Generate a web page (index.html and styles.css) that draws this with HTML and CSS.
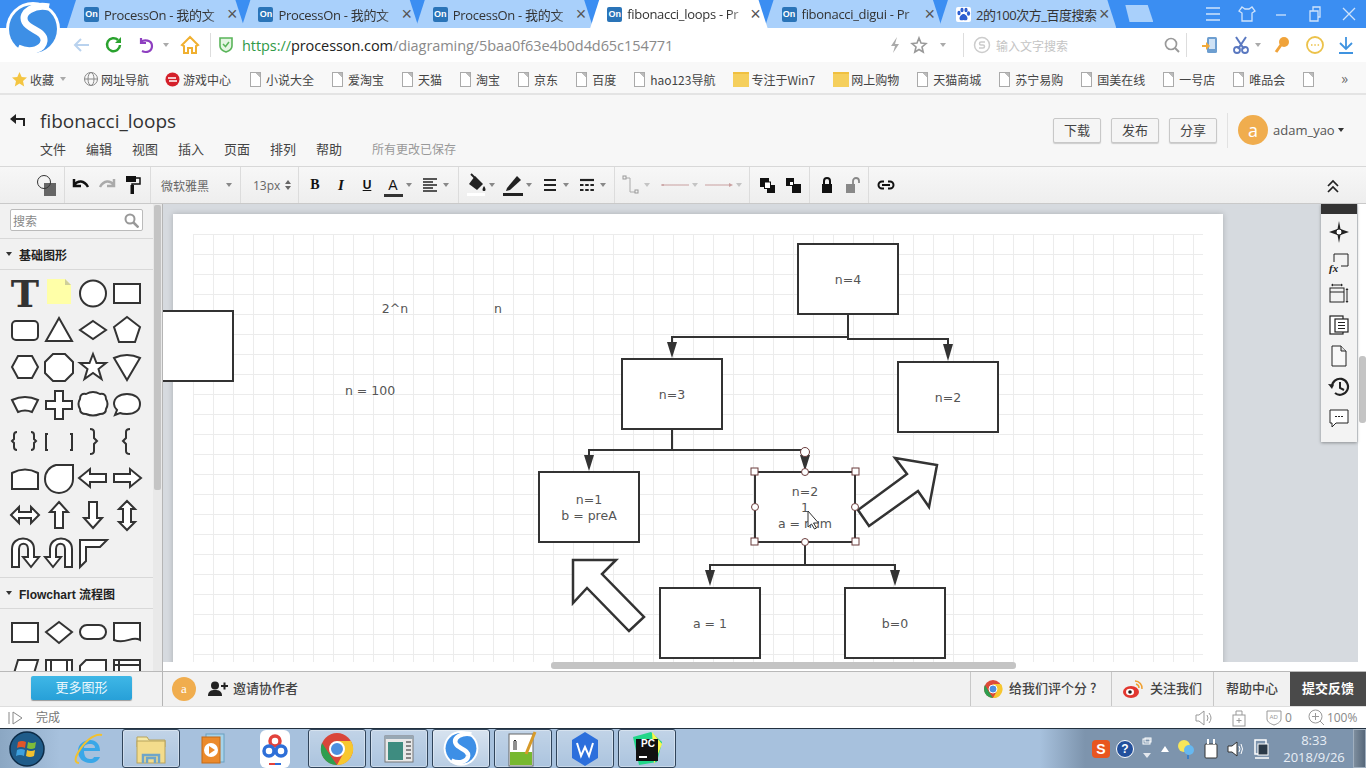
FILE: index.html
```html
<!DOCTYPE html>
<html lang="zh-CN">
<head>
<meta charset="utf-8">
<title>fibonacci_loops</title>
<link rel="stylesheet" href="styles.css">
</head>
<body>
<svg class="logo" width="56" height="56" viewBox="0 0 56 56"><circle cx="28" cy="27" r="27" fill="#fff"/><circle cx="28" cy="27" r="24" fill="#3d8fe6"/><path d="M44 5C30 2 15 10 20 20c4 8 20 9 19 19-1 8-13 13-26 7" fill="none" stroke="#fff" stroke-width="7"/></svg>

<header class="tabbar">
  <div class="tab"><i class="fav">On</i><span class="tab-title">ProcessOn - 我的文</span><b class="x">×</b></div>
  <div class="tab"><i class="fav">On</i><span class="tab-title">ProcessOn - 我的文</span><b class="x">×</b></div>
  <div class="tab"><i class="fav">On</i><span class="tab-title">ProcessOn - 我的文</span><b class="x">×</b></div>
  <div class="tab active"><i class="fav">On</i><span class="tab-title">fibonacci_loops - Pr</span><b class="x">×</b></div>
  <div class="tab"><i class="fav">On</i><span class="tab-title">fibonacci_digui - Pr</span><b class="x">×</b></div>
  <div class="tab"><i class="fav paw"><svg width="15" height="15" viewBox="0 0 15 15"><rect width="15" height="15" rx="2" fill="#fff"/><g fill="#2f5fd0"><ellipse cx="3" cy="6" rx="1.6" ry="2.2"/><ellipse cx="6" cy="3" rx="1.6" ry="2.2"/><ellipse cx="10" cy="3" rx="1.6" ry="2.2"/><ellipse cx="12.5" cy="6.5" rx="1.6" ry="2.2"/><path d="M7.5 7c-2 0-4 2.500-4 4.500 0 2 2 2 4 1.500 2 .5 4 .5 4-1.500S9.500 7 7.500 7z"/></g></svg></i><span class="tab-title wide">2的100次方_百度搜索</span><b class="x xw">×</b></div>
  <div class="newtab"></div>
  <div class="winctl">
    <svg width="34" height="20" viewBox="0 0 34 20"><path d="M10 4h14M10 10h14M10 16h14" class="wc"/></svg>
    <svg width="34" height="20" viewBox="0 0 34 20"><path d="M12 3l3 2h4l3-2 3 4-3 2v8H12V9L9 7z" class="wc"/></svg>
    <svg width="34" height="20" viewBox="0 0 34 20"><path d="M12 11h10" class="wc"/></svg>
    <svg width="34" height="20" viewBox="0 0 34 20"><path d="M12 7h8v10h-8zM15 7V3h7v10h-2" class="wc"/></svg>
    <svg width="34" height="20" viewBox="0 0 34 20"><path d="M11 4l12 12M23 4L11 16" class="wc"/></svg>
  </div>
</header>

<nav class="addr">
  <svg class="ab a1" width="20" height="20" viewBox="0 0 20 20"><path d="M17 10H3M9 4l-6 6 6 6" fill="none" stroke="#b9d2ee" stroke-width="2"/></svg>
  <svg class="ab" width="20" height="20" viewBox="0 0 20 20"><path d="M16 10a6.500 6.500 0 1 1-2-5" fill="none" stroke="#2aa22e" stroke-width="2.500"/><path d="M17 2v6h-6z" fill="#2aa22e"/></svg>
  <svg class="ab" width="20" height="20" viewBox="0 0 20 20"><path d="M5 3v5h5M5 7c3-3 11-2 11 4s-6 7-10 5" fill="none" stroke="#8e3fc0" stroke-width="2.200"/></svg>
  <i class="caret c-undo"></i>
  <svg class="ab home" width="20" height="20" viewBox="0 0 20 20"><path d="M10 2L2 10l2 1v7h4v-5h4v5h4v-7l2-1z" fill="none" stroke="#f0b030" stroke-width="2"/></svg>
  <i class="vsep"></i>
  <svg class="ab shield" width="16" height="18" viewBox="0 0 16 18"><path d="M2 2h12v8c0 3-3 5-6 6-3-1-6-3-6-6z" fill="#e5f5e3" stroke="#5ab55a" stroke-width="1.600"/><path d="M5 8l2.500 2.500L11 6" fill="none" stroke="#5ab55a" stroke-width="1.500"/></svg>
  <span class="url"><span class="g">https://</span><span class="d">processon.com</span>/diagraming/5baa0f63e4b0d4d65c154771</span>
  <div class="addr-r">
    <svg class="ar" width="20" height="20" viewBox="0 0 20 20"><path d="M12 2L6 11h4l-2 7 6-9h-4z" fill="#aaa"/></svg>
    <svg class="ar star" width="20" height="20" viewBox="0 0 20 20"><path d="M10 3l2 5 5 .5-4 3.500 1.200 5L10 14.500 5.800 17 7 12 3 8.500 8 8z" fill="none" stroke="#999" stroke-width="1.600"/></svg>
    <i class="caret c-star"></i>
    <i class="vsep s2"></i>
    <svg class="ar sg" width="18" height="18" viewBox="0 0 18 18"><circle cx="9" cy="9" r="7.500" fill="none" stroke="#ccc" stroke-width="1.500"/><path d="M12 6H8a1.500 1.500 0 0 0 0 3h2a1.500 1.500 0 0 1 0 3H6" fill="none" stroke="#ccc" stroke-width="1.500"/></svg>
    <span class="ph">输入文字搜索</span>
    <svg class="ar mg" width="18" height="18" viewBox="0 0 18 18"><circle cx="8" cy="8" r="5.500" fill="none" stroke="#999" stroke-width="1.700"/><path d="M12 12l4 4" stroke="#999" stroke-width="2"/></svg>
    <i class="vsep s3"></i>
    <svg class="ar ph-i" width="20" height="20" viewBox="0 0 20 20"><rect x="7" y="2" width="10" height="16" rx="1.500" fill="#6d9ed0"/><rect x="9" y="4" width="6" height="10" fill="#cfe2f5"/><path d="M2 10h4V7l4 4-4 4v-3H2z" fill="#f3ab3a"/></svg>
    <svg class="ar sc" width="20" height="20" viewBox="0 0 20 20"><path d="M5 2l8 12M15 2L7 14" stroke="#5a78c0" stroke-width="2"/><circle cx="6" cy="15" r="3" fill="none" stroke="#5a78c0" stroke-width="1.800"/><circle cx="14" cy="15" r="3" fill="none" stroke="#5a78c0" stroke-width="1.800"/></svg>
    <i class="caret c-sc"></i>
    <svg class="ar ky" width="20" height="20" viewBox="0 0 20 20"><circle cx="12" cy="7" r="5" fill="#f0a33a"/><path d="M9 10l-5 7" stroke="#f0a33a" stroke-width="3"/></svg>
    <svg class="ar dt" width="20" height="20" viewBox="0 0 20 20"><circle cx="10" cy="10" r="8" fill="none" stroke="#ecc24a" stroke-width="1.800"/><path d="M6 10h1.500M9.300 10h1.500M12.600 10h1.500" stroke="#ecc24a" stroke-width="1.500"/></svg>
    <svg class="ar dl" width="20" height="20" viewBox="0 0 20 20"><path d="M10 2v11M4 8l6 6 6-6M3 18h14" fill="none" stroke="#3f93e0" stroke-width="1.800"/></svg>
  </div>
</nav>

<nav class="bookmarks">
  <span class="bm first"><svg width="15" height="15" viewBox="0 0 15 15"><path d="M7.500 0l2.200 5 5.300.5-4 3.500 1.200 5.500-4.700-2.900-4.700 2.900L4 9 0 5.500 5.300 5z" fill="#f4c542"/></svg>收藏<i class="caret c-bm"></i></span>
  <span class="bm site"><svg width="16" height="16" viewBox="0 0 16 16"><g fill="none" stroke="#888"><circle cx="8" cy="8" r="6.500"/><ellipse cx="8" cy="8" rx="3" ry="6.500"/><path d="M1.500 8h13"/></g></svg>网址导航</span>
  <span class="bm game"><svg width="15" height="15" viewBox="0 0 15 15"><circle cx="7.500" cy="7.500" r="7" fill="#d4202a"/><path d="M3 6h8M4 9h8" stroke="#fff" stroke-width="1.500"/></svg>游戏中心</span>
  <span class="bm"><i class="doc"></i>小说大全</span>
  <span class="bm"><i class="doc"></i>爱淘宝</span>
  <span class="bm"><i class="doc"></i>天猫</span>
  <span class="bm"><i class="doc"></i>淘宝</span>
  <span class="bm"><i class="doc"></i>京东</span>
  <span class="bm"><i class="doc"></i>百度</span>
  <span class="bm"><i class="doc"></i>hao123导航</span>
  <span class="bm fd"><i class="folder"></i>专注于Win7</span>
  <span class="bm fd"><i class="folder"></i>网上购物</span>
  <span class="bm"><i class="doc"></i>天猫商城</span>
  <span class="bm"><i class="doc"></i>苏宁易购</span>
  <span class="bm"><i class="doc"></i>国美在线</span>
  <span class="bm"><i class="doc"></i>一号店</span>
  <span class="bm"><i class="doc"></i>唯品会</span>
  <span class="bm"><i class="doc"></i></span>
  <span class="more">»</span>
</nav>

<section class="apphead">
  <svg class="back" width="16" height="14" viewBox="0 0 16 14"><path d="M15 12V5H3" fill="none" stroke="#222" stroke-width="2"/><path d="M7 0v10L1 5z" fill="#222"/></svg>
  <div class="doc-info">
    <div class="doc-title">fibonacci_loops</div>
    <div class="menu"><span>文件</span><span>编辑</span><span>视图</span><span>插入</span><span>页面</span><span>排列</span><span>帮助</span><em>所有更改已保存</em></div>
  </div>
  <div class="head-r">
    <button class="btn">下载</button><button class="btn">发布</button><button class="btn">分享</button>
    <i class="head-sep"></i>
    <span class="avatar">a</span><span class="uname">adam_yao</span><i class="caret c-dark"></i>
  </div>
</section>

<section class="toolbar">
  <div class="tg g1"><span class="tb"><svg width="22" height="24" viewBox="0 0 22 24"><rect x="8" y="10" width="12" height="13" fill="#666"/><circle cx="8" cy="9" r="6.500" fill="none" stroke="#333"/></svg></span></div>
  <div class="tg g2">
    <span class="tb"><svg width="18" height="14" viewBox="0 0 18 14"><path d="M2 1v7h7M2 7c4-5 10-5 14 2" fill="none" stroke="#111" stroke-width="2.500"/></svg></span>
    <span class="tb"><svg width="18" height="14" viewBox="0 0 18 14"><path d="M16 1v7H9M16 7C12 2 6 2 2 9" fill="none" stroke="#aaa" stroke-width="2.500"/></svg></span>
    <span class="tb"><svg width="16" height="20" viewBox="0 0 16 20"><path d="M1 1h10v6H1z" fill="#111"/><path d="M11 3h4v6H7v2" fill="none" stroke="#111" stroke-width="1.500"/><rect x="5.500" y="10" width="3.500" height="9" fill="#111"/></svg></span>
  </div>
  <div class="tg g3"><span class="fontname">微软雅黑</span><i class="caret c-tb c-font"></i></div>
  <div class="tg g4"><span class="fontsize">13px</span><span class="stepper"><i></i><i></i></span></div>
  <div class="tg g5">
    <span class="tb fmt b">B</span><span class="tb fmt i">I</span><span class="tb fmt u">U</span>
    <span class="tbc"><span class="tb fmt a">A</span><i class="caret c-tb"></i></span>
    <span class="tbc"><span class="tb"><svg width="16" height="14" viewBox="0 0 16 14"><path d="M1 1h14M1 4h10M1 7h14M1 10h10M1 13h14" stroke="#222" stroke-width="1.300"/></svg></span><i class="caret c-tb"></i></span>
  </div>
  <div class="tg g6">
    <span class="tbc"><span class="tb"><svg width="22" height="24" viewBox="0 0 22 24"><path d="M10 3l8 8-6 6-8-6z" fill="#222"/><path d="M6 1l5 5" stroke="#222" stroke-width="2"/><path d="M19 13c2 3 2 5 0 5s-2-2 0-5z" fill="#222"/><rect x="2" y="20" width="18" height="3" fill="#fff"/></svg></span><i class="caret c-tb"></i></span>
    <span class="tbc"><span class="tb"><svg width="22" height="24" viewBox="0 0 22 24"><path d="M5 15L15 3l4 4-11 10-4 1z" fill="#222"/><rect x="1" y="20" width="20" height="3" fill="#222"/></svg></span><i class="caret c-tb"></i></span>
    <span class="tbc"><span class="tb"><svg width="16" height="14" viewBox="0 0 16 14"><path d="M2 2h12M2 7h12M2 12h12" stroke="#222" stroke-width="2.200"/></svg></span><i class="caret c-tb"></i></span>
    <span class="tbc"><span class="tb"><svg width="16" height="14" viewBox="0 0 16 14"><path d="M1 2h14" stroke="#222" stroke-width="2.200"/><path d="M1 7h14M1 12h14" stroke="#222" stroke-width="2.200" stroke-dasharray="3.500 1.700"/></svg></span><i class="caret c-tb"></i></span>
  </div>
  <div class="tg g7">
    <span class="tbc"><span class="tb"><svg width="18" height="20" viewBox="0 0 18 20"><path d="M3 3h5v14h7" fill="none" stroke="#aaa"/><rect x="1" y="1" width="3" height="3" fill="#f5f5f5" stroke="#999"/><rect x="13" y="15" width="3" height="3" fill="#f5f5f5" stroke="#999"/></svg></span><i class="caret c-tb c-lt"></i></span>
    <span class="tbl"><svg width="28" height="6" viewBox="0 0 28 6"><path d="M0 3h28" stroke="#c9a0a0"/><circle cx="2" cy="3" r="1" fill="#c9a0a0"/></svg><i class="caret c-tb c-lt"></i></span>
    <span class="tbl"><svg width="28" height="6" viewBox="0 0 28 6"><path d="M0 3h26" stroke="#c9a0a0"/><path d="M28 3l-4-2v4z" fill="#c9a0a0"/></svg><i class="caret c-tb c-lt"></i></span>
  </div>
  <div class="tg g8">
    <span class="tb"><svg width="17" height="17" viewBox="0 0 17 17"><rect x="1" y="1" width="9" height="9" fill="#111"/><rect x="8" y="8" width="8" height="8" fill="#111"/><rect x="5.500" y="5" width="6" height="6.500" fill="#fff" stroke="#111"/></svg></span>
    <span class="tb"><svg width="17" height="17" viewBox="0 0 17 17"><rect x="1" y="1" width="8" height="8" fill="#111"/><rect x="7" y="7" width="9" height="9" fill="#111"/><rect x="5" y="5" width="3" height="3" fill="#fff"/></svg></span>
  </div>
  <div class="tg g9">
    <span class="tb"><svg width="14" height="16" viewBox="0 0 14 16"><rect x="2" y="7" width="10" height="9" fill="#111"/><path d="M4 7V4a3 3 0 0 1 6 0v3" fill="none" stroke="#111" stroke-width="2"/></svg></span>
    <span class="tb"><svg width="16" height="16" viewBox="0 0 16 16"><rect x="1" y="7" width="9" height="9" fill="#888"/><path d="M8 7V4a3 3 0 0 1 6 0v2" fill="none" stroke="#888" stroke-width="1.800"/></svg></span>
  </div>
  <div class="tg g10"><span class="tb"><svg width="18" height="10" viewBox="0 0 18 10"><path d="M7 1.500H5a3.500 3.500 0 0 0 0 7h2M11 1.500h2a3.500 3.500 0 0 1 0 7h-2M5 5h8" fill="none" stroke="#111" stroke-width="2"/></svg></span></div>
  <svg class="collapse" width="12" height="14" viewBox="0 0 12 14"><path d="M1 7l5-5 5 5M1 13l5-5 5 5" fill="none" stroke="#222" stroke-width="1.700"/></svg>
</section>

<main class="main">
  <aside class="side">
    <div class="side-in">
      <div class="search"><span>搜索</span><svg width="15" height="15" viewBox="0 0 15 15"><circle cx="6" cy="6" r="4.500" fill="none" stroke="#999" stroke-width="2"/><path d="M9.500 9.500l5 5" stroke="#999" stroke-width="2.500"/></svg></div>
      <div class="sec"><i class="caret c-dark"></i>基础图形</div>
      <div class="palette">
        <span class="cell t-cell">T</span>
        <span class="cell"><svg viewBox="0 0 34 37"><path d="M5 4h18l6 6v19H5z" fill="#ffffa8"/><path d="M23 4l6 6h-6z" fill="#cfcf9a"/></svg></span>
        <span class="cell"><svg viewBox="0 0 34 37"><circle class="sh" cx="17" cy="18.500" r="13"/></svg></span>
        <span class="cell"><svg viewBox="0 0 34 37"><rect class="sh" x="4" y="9" width="26" height="19"/></svg></span>

        <span class="cell"><svg viewBox="0 0 34 37"><rect class="sh" x="4" y="9" width="26" height="19" rx="4"/></svg></span>
        <span class="cell"><svg viewBox="0 0 34 37"><path class="sh" d="M17 6l13 23H4z"/></svg></span>
        <span class="cell"><svg viewBox="0 0 34 37"><path class="sh" d="M17 9l13 9-13 9-13-9z"/></svg></span>
        <span class="cell"><svg viewBox="0 0 34 37"><path class="sh" d="M17 5l13 10-5 15H9L4 15z"/></svg></span>

        <span class="cell"><svg viewBox="0 0 34 37"><path class="sh" d="M10 7h14l6 11-6 11H10L4 18z"/></svg></span>
        <span class="cell"><svg viewBox="0 0 34 37"><path class="sh" d="M11 5h12l8 8v11l-8 8H11l-8-8V13z"/></svg></span>
        <span class="cell"><svg viewBox="0 0 34 37"><path class="sh" d="M17 5l3.500 9H30l-7.500 6 3 10L17 24l-8.500 6 3-10L4 14h9.500z"/></svg></span>
        <span class="cell"><svg viewBox="0 0 34 37"><path class="sh" d="M4 9q13-6 26 0L17 31z"/></svg></span>

        <span class="cell"><svg viewBox="0 0 34 37"><path class="sh" d="M4 14q13-6 26 0l-6 12q-7-3-14 0z"/></svg></span>
        <span class="cell"><svg viewBox="0 0 34 37"><path class="sh" d="M13 5h8v10h9v8h-9v10h-8V23H4v-8h9z"/></svg></span>
        <span class="cell"><svg viewBox="0 0 34 37"><path class="sh" d="M10 8q7-4 14 0 6-1 6 5 3 5 0 10 0 5-6 5-7 3-14 0-6 0-6-5-3-5 0-10 0-6 6-5z"/></svg></span>
        <span class="cell"><svg viewBox="0 0 34 37"><path class="sh" d="M17 8c8 0 13 4 13 10s-5 10-13 10c-3 0-5 0-7-1l-5 2 2-5c-2-2-3-4-3-6 0-6 5-10 13-10z"/></svg></span>

        <span class="cell"><svg viewBox="0 0 34 37"><path class="br" d="M10 9q-3 0-3 3v4l-2 2 2 2v4q0 3 3 3M24 9q3 0 3 3v4l2 2-2 2v4q0 3-3 3" transform="translate(-1 0)"/></svg></span>
        <span class="cell"><svg viewBox="0 0 34 37"><path class="br" d="M7 11H5v16h2M29 11h2v16h-2" transform="translate(-1 0)"/></svg></span>
        <span class="cell"><svg viewBox="0 0 34 37"><path class="br" d="M14 6q4 0 4 3v6l3 3-3 3v7q0 3-4 3"/></svg></span>
        <span class="cell"><svg viewBox="0 0 34 37"><path class="br" d="M20 6q-4 0-4 3v6l-3 3 3 3v7q0 3 4 3"/></svg></span>

        <span class="cell"><svg viewBox="0 0 34 37"><path class="sh" d="M4 29V13q13-7 26 0v16z"/></svg></span>
        <span class="cell"><svg viewBox="0 0 34 37"><path class="sh" d="M14 5h17v14a14 14 0 1 1-28 0A14 14 0 0 1 14 5z"/></svg></span>
        <span class="cell"><svg viewBox="0 0 34 37"><path class="sh" d="M3 18l11-9v5h16v8H14v5z"/></svg></span>
        <span class="cell"><svg viewBox="0 0 34 37"><path class="sh" d="M31 18l-11-9v5H4v8h16v5z"/></svg></span>

        <span class="cell"><svg viewBox="0 0 34 37"><path class="sh" d="M3 18l8-8v5h12v-5l8 8-8 8v-5H11v5z"/></svg></span>
        <span class="cell"><svg viewBox="0 0 34 37"><path class="sh" d="M17 5l9 10h-5v16h-8V15H8z"/></svg></span>
        <span class="cell"><svg viewBox="0 0 34 37"><path class="sh" d="M17 31l9-10h-5V5h-8v16H8z"/></svg></span>
        <span class="cell"><svg viewBox="0 0 34 37"><path class="sh" d="M17 4l8 8h-4v13h4l-8 8-8-8h4V12H9z"/></svg></span>

        <span class="cell"><svg viewBox="0 0 34 37"><path class="sh" d="M4 33V15C4 1 26 1 26 15v8h5l-8 10-8-10h5v-8c0-7-9-7-9 0v18z"/></svg></span>
        <span class="cell"><svg viewBox="0 0 34 37"><path class="sh" d="M30 33V15C30 1 8 1 8 15v8H3l8 10 8-10h-5v-8c0-7 9-7 9 0v18z"/></svg></span>
        <span class="cell"><svg viewBox="0 0 34 37"><path class="sh" d="M4 33V6h27l-7 7H10v14z"/></svg></span>
      </div>
      <div class="sec"><i class="caret c-dark"></i>Flowchart 流程图</div>
      <div class="palette p2">
        <span class="cell"><svg viewBox="0 0 34 37"><rect class="sh" x="4" y="9" width="26" height="19"/></svg></span>
        <span class="cell"><svg viewBox="0 0 34 37"><path class="sh" d="M17 8l13 10-13 11L4 18z"/></svg></span>
        <span class="cell"><svg viewBox="0 0 34 37"><rect class="sh" x="4" y="11" width="26" height="14" rx="7"/></svg></span>
        <span class="cell"><svg viewBox="0 0 34 37"><path class="sh" d="M4 9h26v17c-8-5-14 5-26 0z"/></svg></span>
        <span class="cell"><svg viewBox="0 0 34 37"><path class="sh" d="M10 9h20l-6 20H4z"/></svg></span>
        <span class="cell"><svg viewBox="0 0 34 37"><path class="sh" d="M4 9h26v20H4zM9 9v20M25 9v20"/></svg></span>
        <span class="cell"><svg viewBox="0 0 34 37"><path class="sh" d="M10 9h20v20H4V15z"/></svg></span>
        <span class="cell"><svg viewBox="0 0 34 37"><path class="sh" d="M4 9h26v20H4zM4 14h26M9 9v20"/></svg></span>
      </div>
    </div>
    <div class="side-scroll"><i></i></div>
  </aside>

  <div class="stage">
    <div class="viewport">
      <div class="paper"><div class="grid"></div></div>
      <svg class="diagram" width="1203" height="458" viewBox="163 204 1203 458">
        <g class="node">
          <rect x="798" y="244" width="100" height="70"/>
          <rect x="622" y="359" width="100" height="70"/>
          <rect x="898" y="362" width="100" height="70"/>
          <rect x="539" y="472" width="100" height="70"/>
          <rect x="755" y="472" width="100" height="70"/>
          <rect x="660" y="588" width="100" height="70"/>
          <rect x="845" y="588" width="100" height="70"/>
          <rect x="160" y="311" width="73" height="70"/>
        </g>
        <g class="conn">
          <path d="M848 314v23H672v6M848 337v2h100v5"/>
          <path d="M672 429v21H589v6M672 450H805v4"/>
          <path d="M805 542v23H710v6M805 565h90v6"/>
        </g>
        <g class="head">
          <path d="M667 342h10l-5 16z"/><path d="M943 344h10l-5 17z"/>
          <path d="M584 455h10l-5 16z"/><path d="M800 455h10l-5 16z"/>
          <path d="M705 570h10l-5 16z"/><path d="M890 570h10l-5 16z"/>
        </g>
        <g class="bigarrow">
          <path d="M895 458l42 7-8 42-11-16-49 35-11-16 49-36z"/>
          <path d="M573 560h43l-14 14 42 43-15 14-42-43-14 15z"/>
        </g>
        <g class="label">
          <text x="848" y="284">n=4</text>
          <text x="672" y="399">n=3</text>
          <text x="948" y="402">n=2</text>
          <text x="589" y="504">n=1</text>
          <text x="589" y="520">b = preA</text>
          <text x="805" y="496">n=2</text>
          <text x="805" y="512">1</text>
          <text x="805" y="528">a = num</text>
          <text x="710" y="628">a = 1</text>
          <text x="895" y="628">b=0</text>
          <text x="395" y="313">2^n</text>
          <text x="498" y="313">n</text>
          <text x="370" y="395">n = 100</text>
        </g>
        <path class="ptr" d="M808 511v16l3.500-3 3 5 2-1-3-5h5z"/>
        <g class="hd">
          <circle cx="805" cy="452" r="4.500"/>
          <rect x="751" y="468" width="7" height="7"/><rect x="852" y="468" width="7" height="7"/>
          <rect x="751" y="538" width="7" height="7"/><rect x="852" y="538" width="7" height="7"/>
          <circle cx="805" cy="472" r="3.500"/><circle cx="755" cy="507" r="3.500"/><circle cx="855" cy="507" r="3.500"/><circle cx="805" cy="542" r="3.500"/>
        </g>
      </svg>
      <div class="vscroll"><i></i></div>
      <div class="rail">
        <div class="rail-top"></div>
        <svg width="22" height="22" viewBox="0 0 22 22"><path d="M11 0l1.500 8 8.500 3-8.500 3L11 22l-1.500-8L1 11l8.500-3z" fill="#222"/><circle cx="11" cy="11" r="3" fill="#fff" stroke="#222"/></svg>
        <svg width="22" height="22" viewBox="0 0 22 22"><path d="M6 2h14v12H13" fill="none" stroke="#222"/><path d="M6 2v8" stroke="#222"/><text x="1" y="20" class="fx">fx</text></svg>
        <svg width="22" height="22" viewBox="0 0 22 22"><rect x="2" y="5" width="14" height="14" fill="none" stroke="#222"/><path d="M2 9h14M5 2h8M19 7v11" fill="none" stroke="#222"/><path d="M3 2l2-1.500v3zM15 2l-2-1.500v3zM19 5l-1.500 2h3zM19 20l-1.500-2h3z" fill="#222"/></svg>
        <svg width="22" height="22" viewBox="0 0 22 22"><rect x="2" y="2" width="13" height="18" fill="#fff" stroke="#222" stroke-width="1.200"/><rect x="7" y="5" width="13" height="13" fill="#fff" stroke="#222" stroke-width="1.200"/><path d="M10 8.500h7M10 11.500h7M10 14.500h7" stroke="#222" stroke-width="1.200"/></svg>
        <svg width="22" height="22" viewBox="0 0 22 22"><path d="M4 1h9l5 5v15H4z" fill="#f8f8f8" stroke="#222"/><path d="M13 1v5h5" fill="#ddd" stroke="#222"/></svg>
        <svg width="22" height="22" viewBox="0 0 22 22"><path d="M4 11a8 8 0 1 1 3 6" fill="none" stroke="#222" stroke-width="2.200"/><path d="M0 8l6 .5L4 13z" fill="#222"/><path d="M12 6v6l4 2" fill="none" stroke="#222" stroke-width="2"/></svg>
        <svg width="22" height="22" viewBox="0 0 22 22"><path d="M2 3h18v13H8l-4 4v-4H2z" fill="#fff" stroke="#222"/><path d="M7 9.500h2M10 9.500h2M13 9.500h2" stroke="#222"/></svg>
      </div>
    </div>
    <div class="hscroll"><i></i></div>
  </div>
</main>

<section class="footer">
  <div class="foot-l"><button class="more-btn">更多图形</button></div>
  <div class="foot-m">
    <span class="avatar sm">a</span>
    <svg width="20" height="16" viewBox="0 0 20 16"><circle cx="7" cy="4.500" r="4" fill="#222"/><path d="M0 15c0-5 3-6 7-6s7 1 7 6z" fill="#222"/><path d="M13 5h7M16.500 1.500v7" stroke="#222" stroke-width="2"/></svg>
    <span class="invite">邀请协作者</span>
  </div>
  <div class="foot-r">
    <span class="fi f1"><svg width="20" height="20" viewBox="0 0 20 20"><circle cx="10" cy="10" r="9" fill="#dd4b39"/><path d="M10 19a9 9 0 0 1-8-13l4 7z" fill="#2e9e4f"/><path d="M10 5h8a9 9 0 0 1-8 14l4-7z" fill="#f7c72f"/><circle cx="10" cy="10" r="4" fill="#4c8fe0" stroke="#fff"/></svg>给我们评个分 ?</span>
    <span class="fi f2"><svg width="22" height="20" viewBox="0 0 22 20"><ellipse cx="9" cy="13" rx="8" ry="6" fill="#e2372f"/><ellipse cx="8" cy="13" rx="4" ry="3.200" fill="#fff"/><circle cx="8" cy="13" r="1.800" fill="#222"/><path d="M13 2a7 7 0 0 1 7 8M14 5a4 4 0 0 1 3 4" fill="none" stroke="#f0a030" stroke-width="1.500"/></svg>关注我们</span>
    <span class="fi f3">帮助中心</span>
    <span class="fi f4">提交反馈</span>
  </div>
</section>

<section class="status">
  <svg class="st-play" width="16" height="14" viewBox="0 0 16 14"><path d="M1 1v12M5 1l9 6-9 6z" fill="none" stroke="#888"/></svg>
  <span class="st-text">完成</span>
  <div class="st-r">
    <svg width="18" height="16" viewBox="0 0 18 16"><path d="M1 5h3l5-4v14l-5-4H1z" fill="none" stroke="#999"/><path d="M12 5q2 3 0 6M14 3q4 5 0 10" fill="none" stroke="#999"/></svg>
    <svg width="16" height="18" viewBox="0 0 16 18"><rect x="2" y="6" width="12" height="11" fill="none" stroke="#999"/><path d="M5 6V2h6v4M8 9v5M5.500 11.500h5" fill="none" stroke="#999"/></svg>
    <span class="st-ad"><svg width="16" height="17" viewBox="0 0 16 17"><path d="M1 2h14v8c0 3-4 5-7 6-3-1-7-3-7-6z" fill="none" stroke="#999"/><text x="3.500" y="10" class="adt">AD</text></svg>0</span>
    <span class="st-zoom"><svg width="17" height="17" viewBox="0 0 17 17"><circle cx="7.500" cy="7.500" r="6.500" fill="none" stroke="#999"/><path d="M4 7.500h7M7.500 4v7M12 12l4 4" stroke="#999"/></svg>100%</span>
  </div>
</section>

<footer class="taskbar">
  <div class="orb-slot"><svg width="40" height="40" viewBox="0 0 40 40"><circle cx="20" cy="20" r="17" fill="#1f5c8a" stroke="#0d2c48" stroke-width="1.500"/><path d="M11 13q4-2 8 0l-1 6q-4-2-8 0z" fill="#e0562a"/><path d="M21 13q4 2 8 0l-1 6q-4 2-8 0z" fill="#7fbb3a"/><path d="M10 21q4-2 8 0l-1 6q-4-2-8 0z" fill="#3da0dd"/><path d="M20 21q4 2 8 0l-1 6q-4 2-8 0z" fill="#f2c12f"/></svg></div>
  <div class="task"><svg width="34" height="36" viewBox="0 0 34 36"><path d="M8 20h20c0-7-4-11-10-11S6 13 6 20s5 12 12 12c5 0 8-2 10-6h-6c-1 2-2 2-4 2-4 0-6-3-6-8zM12 17c0-3 3-4 6-4s5 1 5 4z" fill="#39a7e8"/><path d="M30 4c-8-2-20 8-26 22-1 4 0 6 3 6" fill="none" stroke="#f2c12f" stroke-width="2"/></svg></div>
  <div class="task on"><svg width="36" height="36" viewBox="0 0 36 36"><path d="M4 6h10l2 3h16v7H4z" fill="#f5e9a8" stroke="#b8a35c"/><rect x="4" y="10" width="28" height="22" fill="#f3dc8c" stroke="#b8a35c"/><path d="M10 32V24h16v8M14 32v-5h8v5" fill="none" stroke="#6fa5c8" stroke-width="2.500"/></svg></div>
  <div class="task"><svg width="30" height="34" viewBox="0 0 30 34"><rect x="8" y="2" width="18" height="28" fill="#a6d3ea" stroke="#6aa0c0"/><rect x="4" y="5" width="18" height="26" fill="#eb8a2c" stroke="#c56a16"/><circle cx="13" cy="18" r="7" fill="#fff"/><path d="M11 14l6 4-6 4z" fill="#eb8a2c"/></svg></div>
  <div class="task"><svg width="34" height="38" viewBox="0 0 34 38"><rect x="2" y="0" width="30" height="38" rx="6" fill="#fff"/><g fill="none" stroke-width="3.500"><circle cx="17" cy="11" r="5" stroke="#e2423c"/><circle cx="11" cy="21" r="5" stroke="#2e6fd8"/><circle cx="23" cy="21" r="5" stroke="#2e6fd8"/></g><rect x="11" y="33" width="6" height="2" fill="#e2423c"/><rect x="17" y="33" width="6" height="2" fill="#2e6fd8"/></svg></div>
  <div class="task on"><svg width="34" height="34" viewBox="0 0 34 34"><circle cx="17" cy="17" r="16" fill="#d9463a"/><path d="M17 33A16 16 0 0 1 2 11l8 12z" fill="#2e9e4f"/><path d="M17 9h14a16 16 0 0 1-14 24l6-11z" fill="#f7c72f"/><circle cx="17" cy="17" r="7" fill="#4c8fe0" stroke="#fff" stroke-width="2"/></svg></div>
  <div class="task on"><svg width="32" height="32" viewBox="0 0 32 32"><rect x="2" y="3" width="28" height="26" fill="#e8e8e8" stroke="#777"/><rect x="2" y="3" width="28" height="3" fill="#98a8b4"/><rect x="5" y="9" width="15" height="18" fill="#3e8c80"/><path d="M23 9h5M23 13h5M23 17h5M23 21h5M23 25h5" stroke="#666" stroke-width="1.500"/></svg></div>
  <div class="task on act"><svg width="36" height="36" viewBox="0 0 56 56"><circle cx="28" cy="27" r="27" fill="#fff"/><circle cx="28" cy="27" r="24" fill="#3d8fe6"/><path d="M44 5C30 2 15 10 20 20c4 8 20 9 19 19-1 8-13 13-26 7" fill="none" stroke="#fff" stroke-width="7"/></svg></div>
  <div class="task on"><svg width="34" height="38" viewBox="0 0 34 38"><rect x="3" y="4" width="24" height="32" fill="#fff" stroke="#666"/><rect x="4" y="22" width="22" height="13" fill="#77b82f"/><path d="M8 20V11q1-2 2 0v9" fill="none" stroke="#222"/><path d="M29 2L20 24" stroke="#d69a2a" stroke-width="3"/></svg></div>
  <div class="task on"><svg width="30" height="36" viewBox="0 0 30 36"><path d="M15 1l13 8v18l-13 8-13-8V9z" fill="#2c6fdc"/><path d="M7 12l4 13 4-9 4 9 4-13" fill="none" stroke="#fff" stroke-width="2"/></svg></div>
  <div class="task on"><svg width="34" height="36" viewBox="0 0 34 36"><path d="M3 6l18-5 11 10-5 20-18 3z" fill="#21d789"/><path d="M22 1l10 12-8 20z" fill="#fcf84a"/><rect x="6" y="8" width="22" height="22" fill="#111"/><path d="M9 26h8" stroke="#fff" stroke-width="2"/></svg><span class="pc">PC</span></div>
  <div class="tray">
    <span class="t-s">S</span>
    <span class="t-q">?</span>
    <svg width="14" height="24" viewBox="0 0 14 24"><rect x="3" y="2" width="7" height="5" fill="none" stroke="#fff"/><rect x="5" y="1" width="6" height="4" fill="none" stroke="#fff"/><path d="M3 16h8l-4 5z" fill="#e4e8ee"/></svg>
    <svg class="t-up" width="10" height="8" viewBox="0 0 10 8"><path d="M1 7h8L5 1z" fill="#fff"/></svg>
    <svg width="20" height="24" viewBox="0 0 20 24"><circle cx="8" cy="9" r="6" fill="#f7e65a"/><circle cx="13" cy="13" r="5" fill="#66b8f0"/><path d="M12 18v4" stroke="#3a7fc8" stroke-width="2"/></svg>
    <svg width="18" height="22" viewBox="0 0 18 22"><rect x="3" y="6" width="12" height="14" rx="1" fill="#fff" stroke="#333"/><path d="M6 1v5M12 1v5" stroke="#fff" stroke-width="2"/></svg>
    <svg width="20" height="18" viewBox="0 0 20 18"><path d="M2 6h4l5-4v14l-5-4H2z" fill="#fff" stroke="#333"/><path d="M13 6q2 3 0 6M15 4q3 5 0 10" fill="none" stroke="#fff"/></svg>
    <svg width="20" height="22" viewBox="0 0 20 22"><rect x="3" y="2" width="11" height="14" fill="none" stroke="#fff" stroke-width="1.500"/><rect x="6" y="6" width="10" height="11" fill="#2b3a48" stroke="#fff"/><path d="M3 20h14" stroke="#fff" stroke-width="1.500"/></svg>
    <div class="clock"><span>8:33</span><span>2018/9/26</span></div>
    <div class="show-desk"></div>
  </div>
</footer>
</body>
</html>
```

FILE: styles.css
```css
* { box-sizing: border-box; }
html, body { margin: 0; padding: 0; }
body {
  position: relative;
  width: 1366px;
  height: 768px;
  overflow: hidden;
  display: flex;
  flex-direction: column;
  background: #fff;
  font-family: "Noto Sans CJK SC", "Noto Sans", sans-serif;
  font-size: 12px;
  color: #555;
}
i, em { font-style: normal; display: block; }
svg { display: block; flex: none; }

.logo { position: absolute; left: 5px; top: 2px; z-index: 5; }

/* tabs */
.tabbar { height: 28px; flex: none; display: flex; padding-left: 67px; background: #3b8ef2; position: relative; }
.tab {
  width: 177.400px; margin-right: -3px; height: 28px; flex: none; display: flex; align-items: center; padding: 0 6px 0 17px;
  background: #a9d0fb; clip-path: polygon(9px 0, calc(100% - 9px) 0, 100% 100%, 0 100%);
  color: #333; font: 13px "Open Sans", "Noto Sans CJK SC", sans-serif;
}
.tab.active { background: #fff; z-index: 2; }
.fav {
  width: 15px; height: 15px; flex: none; background: #2a74b8; color: #fff; border-radius: 2px; margin-right: 5px;
  font: bold 9px/15px "Liberation Sans", sans-serif; text-align: center;
}
.fav.paw { background: none; }
.tab-title {
  width: 118px; white-space: nowrap; flex: none; letter-spacing: -.3px;
  -webkit-mask-image: linear-gradient(90deg, #000 86%, rgba(0,0,0,.25));
  mask-image: linear-gradient(90deg, #000 86%, rgba(0,0,0,.25));
}
.tab-title.wide { width: 119px; -webkit-mask-image: none; mask-image: none; letter-spacing: -.5px; }
.x { font: 18px/1 "Liberation Sans", sans-serif; color: #555; margin-left: 5px; }
.x.xw { margin-left: 4px; }
.newtab { width: 28px; height: 17px; margin: 5px 0 0 12px; background: #a9d0fb; clip-path: polygon(0 0, 80% 0, 100% 100%, 15% 100%); }
.winctl { position: absolute; left: 1196px; top: 4px; display: flex; }
.wc { fill: none; stroke: #cfe3fb; stroke-width: 1.300; }

/* address */
.addr { height: 34px; flex: none; display: flex; align-items: center; background: #fff; padding-left: 72px; position: relative; }
.ab { margin-right: 12px; }
.caret { width: 0; height: 0; border-left: 3px solid transparent; border-right: 3px solid transparent; border-top: 4px solid #aaa; flex: none; }
.c-undo { margin: 0 11px 0 -5px; }
.home { margin-right: 10px; }
.vsep { width: 1px; height: 24px; background: #ddd; flex: none; }
.addr .vsep { margin: 0 7px 0 0; }
.shield { margin-right: 8px; }
.url { font: 14.500px "Open Sans", sans-serif; color: #8a8a8a; white-space: nowrap; letter-spacing: -.07px; }
.url .g { color: #2f9a48; }
.url .d { color: #222; }
.addr-r { position: absolute; left: 885px; top: 0; height: 34px; width: 481px; display: flex; align-items: center; }
.ar { margin-right: 4px; }
.star { margin-right: 11px; }
.addr .s2 { margin: 0 9px 0 17px; }
.sg { margin-right: 5px; }
.ph { color: #c4c4c4; font-size: 12px; width: 167px; flex: none; }
.mg { margin: 0 5px 0 0; }
.addr .s3 { margin: 0 13px 0 0; }
.ph-i { margin-right: 11px; }
.sc { margin-right: 4px; }
.c-sc { margin-right: 11px; }
.ky { margin-right: 13px; }
.dt { margin-right: 11px; }

/* bookmarks */
.bookmarks { height: 33px; flex: none; display: flex; align-items: center; gap: 18px; padding: 3px 0 0 12px; background: #f8f8f8; border-bottom: 2px solid #e4e4e4; position: relative; }
.bm { display: flex; align-items: center; gap: 5px; color: #444; font: 12px "Noto Sans CJK SC", sans-serif; white-space: nowrap; }
.bm.first { gap: 3px; }
.bm.fd { gap: 2px; }
.bm.site { gap: 2px; }
.bm.game { gap: 3px; margin-left: -2px; margin-right: 1px; }
.c-bm { margin-left: 3px; margin-right: -1px; }
.doc { width: 11px; height: 15px; background: linear-gradient(225deg, #bbb 0 3px, #fff 3px); border: 1px solid #aaa; flex: none; }
.folder { width: 16px; height: 15px; background: #f5cf5c; border-top: 2px solid #f0c040; flex: none; }
.more { position: absolute; left: 1341px; top: 5px; font-size: 15px; color: #666; }

/* app header */
.apphead { height: 71px; flex: none; display: flex; background: #f7f7f7; position: relative; }
.back { margin: 19px 0 0 9px; }
.doc-info { margin-left: 15px; padding-top: 12px; }
.doc-title { font: 19px/28px "Open Sans", sans-serif; color: #333; }
.menu { display: flex; gap: 20px; margin-top: 5px; font: 13px/18px "Noto Sans CJK SC", sans-serif; color: #444; }
.menu em { color: #999; font-size: 12px; margin-left: 10px; }
.head-r { margin-left: auto; display: flex; align-items: center; height: 70px; }
.btn { width: 48px; height: 25px; margin-right: 10px; padding: 0 0 2px; background: #f5f5f5; border: 1px solid #c8c8c8; border-radius: 2px; box-shadow: 0 1px 1px #ccc; color: #444; font: 13px "Noto Sans CJK SC", sans-serif; }
.head-sep { width: 1px; height: 35px; background: #e2e2e2; margin: 0 10px 0 0; }
.avatar { width: 30px; height: 30px; border-radius: 50%; background: #f0ad4e; color: #fff; font: 18px/30px "Open Sans", sans-serif; text-align: center; flex: none; }
.uname { margin-left: 5px; font: 13px "Open Sans", sans-serif; color: #555; width: 64px; white-space: nowrap; }
.c-dark { border-top-color: #333; }
.head-r .c-dark { margin: 0 22px 0 1px; }

/* toolbar */
.toolbar { height: 38px; flex: none; display: flex; align-items: stretch; background: linear-gradient(#f7f7f7, #eeeeee); border-top: 1px solid #d8d8d8; border-bottom: 1px solid #c9c9c9; position: relative; }
.tg { display: flex; align-items: center; border-right: 1px solid #dcdcdc; height: 100%; }
.tb { width: 26px; height: 30px; flex: none; display: flex; align-items: center; justify-content: center; }
.tbc { width: 37px; display: flex; align-items: center; flex: none; }
.tbl { width: 44px; display: flex; align-items: center; gap: 3px; flex: none; }
.c-tb { border-top-color: #888; margin-left: 0; }
.c-lt { border-top-color: #c4c4c4; }
.g1 { width: 65px; padding-left: 34px; }
.g2 { width: 86px; padding-left: 3px; }
.g3 { width: 90px; padding-left: 10px; justify-content: flex-start; }
.fontname { color: #666; width: 65px; font-size: 12px; }
.g4 { width: 58px; padding-left: 12px; color: #666; font: 12px "Open Sans", sans-serif; }
.fontsize { width: 32px; }
.stepper i { width: 0; height: 0; border-left: 3px solid transparent; border-right: 3px solid transparent; margin: 2px 0; }
.stepper i:first-child { border-bottom: 4px solid #666; }
.stepper i:last-child { border-top: 4px solid #666; }
.g5 { width: 160px; padding-left: 3px; }
.fmt { font: bold 14px "Liberation Serif", serif; color: #111; }
.fmt.i { font-style: italic; font-size: 15px; }
.fmt.u { font: bold 12px "Liberation Sans", sans-serif; text-decoration: underline; }
.fmt.a { font: 14px "Liberation Sans", sans-serif; background: linear-gradient(#333, #333) no-repeat 50% 90% / 19px 3px; }
.g6 { width: 156px; padding-left: 4px; }
.g7 { width: 135px; padding-left: 3px; }
.g7 .tbl:nth-child(2) { margin-left: 6px; }
.g8 { width: 60px; padding-left: 4px; }
.g9 { width: 59px; padding-left: 4px; }
.g10 { border-right: 0; padding-left: 4px; }
.collapse { position: absolute; left: 1327px; top: 12px; }

/* main */
.main { height: 467px; flex: none; display: flex; }
.side { width: 163px; flex: none; display: flex; background: #f1f1f1; border-right: 1px solid #b5b5b5; overflow: hidden; }
.side-in { width: 153px; flex: none; }
.search { margin: 5px 0 7px 10px; width: 133px; height: 22px; background: #fff; border: 1px solid #bbb; border-radius: 2px; display: flex; align-items: center; justify-content: space-between; padding: 0 3px 0 2px; color: #888; font-size: 12px; }
.sec { height: 32px; display: flex; align-items: center; gap: 7px; padding-left: 6px; border-top: 1px solid #d8d8d8; border-bottom: 1px solid #d8d8d8; font: bold 12px "Liberation Sans", "Noto Sans CJK SC", sans-serif; color: #222; }
.palette { display: grid; grid-template-columns: repeat(4, 34px); grid-auto-rows: 37px; padding: 5px 0 6px 8px; }
.p2 { padding-top: 5px; }
.cell { display: block; width: 34px; height: 37px; }
.cell svg { width: 34px; height: 37px; }
.t-cell { font: bold 38px/37px "DejaVu Serif", serif; color: #333; text-align: center; }
.sh { fill: #fff; stroke: #333; stroke-width: 2; }
.br { fill: none; stroke: #333; stroke-width: 2; }
.side-scroll { flex: 1; background: #e9e9e9; padding: 0 1px 0 1px; }
.side-scroll i { height: 285px; background: #c4c4c4; border-radius: 2px; margin-top: 1px; }

/* stage */
.stage { flex: 1; display: flex; flex-direction: column; background: #fff; min-width: 0; }
.viewport { height: 458px; flex: none; position: relative; overflow: hidden; background: #d6dadf; padding: 10px 0 0 10px; }
.paper { width: 1050px; height: 470px; background: #fff; padding: 20px; box-shadow: 0 0 6px rgba(0,0,0,.2); }
.grid {
  height: 450px;
  background-color: #fff;
  background-image: linear-gradient(#ececec 1px, transparent 1px), linear-gradient(90deg, #ececec 1px, transparent 1px);
  background-size: 20px 20px;
}
.diagram { position: absolute; left: 0; top: 0; }
.node rect { fill: #fff; stroke: #333; stroke-width: 2; }
.conn path { fill: none; stroke: #333; stroke-width: 2; }
.head path { fill: #333; }
.bigarrow path { fill: #fff; stroke: #333; stroke-width: 2.500; }
.label text { font: 12.500px "DejaVu Sans", sans-serif; fill: #555; text-anchor: middle; }
.ptr { fill: #fff; stroke: #333; stroke-width: 1; }
.hd circle { fill: #fff; stroke: #6b3d3d; stroke-width: 1; }
.hd rect { fill: #fff; stroke: #6b3d3d; stroke-width: 1; }
.vscroll { position: absolute; right: 0; top: 0; bottom: 0; width: 8px; background: #fff; }
.vscroll i { width: 7px; height: 67px; margin-top: 152px; margin-left: 1px; background: #c4c4c4; border-radius: 3px; }
.rail { position: absolute; left: 1158px; top: 0; width: 36px; height: 238px; background: #f3f3f3; box-shadow: 0 1px 3px rgba(0,0,0,.35); display: flex; flex-direction: column; align-items: center; gap: 9px; }
.rail-top { width: 36px; height: 10px; background: #333; margin-bottom: -2px; }
.fx { font: italic bold 11px "Liberation Serif", serif; fill: #222; }
.hscroll { height: 9px; flex: none; background: #fff; padding-left: 388px; }
.hscroll i { width: 465px; height: 7px; background: #c4c4c4; border-radius: 3px; }

/* footer bar */
.footer { height: 36px; flex: none; display: flex; background: #f1f1f1; border-top: 1px solid #b9b9b9; border-bottom: 1px solid #dedede; }
.foot-l { width: 163px; flex: none; padding: 4px 0 0 31px; border-right: 1px solid #b5b5b5; }
.more-btn { width: 101px; height: 24px; padding: 0 0 3px; background: linear-gradient(#3fb7e6, #27a0d8); border: 0; border-radius: 2px; box-shadow: 0 1px 1px #999; color: #e8f6fc; font: 13px "Noto Sans CJK SC", sans-serif; }
.foot-m { display: flex; align-items: center; padding-left: 9px; }
.avatar.sm { width: 24px; height: 24px; font: 13px/24px "Liberation Serif", serif; margin-right: 12px; }
.invite { margin-left: 5px; padding-bottom: 3px; font-size: 13px; color: #444; font-weight: 500; }
.foot-r { margin-left: auto; display: flex; height: 100%; font-size: 13px; color: #444; font-weight: 500; }
.fi { display: flex; align-items: center; border-left: 1px solid #c8c8c8; gap: 6px; white-space: nowrap; padding-bottom: 3px; }
.fi svg { margin-top: 3px; }
.f1 { width: 141px; padding-left: 12px; }
.f2 { width: 102px; padding-left: 10px; }
.f3 { width: 77px; padding-left: 12px; }
.f4 { width: 76px; padding-left: 12px; background: #4a4a4a; color: #fff; font-weight: 700; border-left: 0; }

/* status */
.status { height: 21px; flex: none; display: flex; align-items: center; background: #fff; padding: 0 0 0 8px; color: #777; font-size: 12px; position: relative; }
.st-play { margin-right: 12px; }
.st-text { padding-bottom: 2px; }
.st-r { position: absolute; left: 1195px; top: 0; height: 21px; display: flex; align-items: center; font: 12px "Open Sans", sans-serif; color: #888; }
.st-r svg { margin-right: 0; }
.st-r > svg:first-child { margin-right: 18px; }
.st-r > svg:nth-child(2) { margin-right: 19px; }
.st-ad { display: flex; align-items: center; gap: 3px; margin-right: 16px; }
.adt { font: 6px "Liberation Sans", sans-serif; fill: #999; }
.st-zoom { display: flex; align-items: center; gap: 2px; }

/* taskbar */
.taskbar { height: 40px; flex: none; display: flex; align-items: stretch; background: linear-gradient(90deg, #8ba7c3 0, #a7c1dd 60px, #a7c1dd 1040px, #7d94ad 1085px, #7d94ad 100%); border-top: 1px solid #22303e; position: relative; }
.orb-slot { width: 60px; flex: none; display: flex; align-items: center; justify-content: center; padding-right: 6px; }
.task { width: 58px; margin-right: 4px; flex: none; display: flex; align-items: center; justify-content: center; position: relative; border: 1px solid transparent; border-radius: 3px; }
.task.on { border-color: #30445a; background: linear-gradient(rgba(255,255,255,.3), rgba(255,255,255,.05)); box-shadow: inset 0 0 0 1px rgba(255,255,255,.35); }
.task.act { background: linear-gradient(rgba(255,255,255,.55), rgba(255,255,255,.2)); }
.pc { position: absolute; left: 22px; top: 8px; color: #fff; font: bold 10px "Liberation Sans", sans-serif; }
.tray { position: absolute; left: 1092px; top: 0; right: 0; height: 39px; display: flex; align-items: center; gap: 6px; }
.t-s { width: 18px; height: 18px; background: #e8561f; border-radius: 4px; color: #fff; font: bold 14px/18px "Liberation Sans", sans-serif; text-align: center; }
.t-q { width: 18px; height: 18px; background: #23509c; border: 1px solid #fff; border-radius: 50%; color: #fff; font: bold 12px/16px "Liberation Sans", sans-serif; text-align: center; }
.clock { width: 72px; display: flex; flex-direction: column; align-items: center; color: #e8eef5; font: 13px/17px "Open Sans", sans-serif; white-space: nowrap; }
.show-desk { position: absolute; right: 0; top: 0; width: 13px; height: 39px; background: linear-gradient(90deg, #7e8e9e, #56677a); border: 1px solid #a0afbf; }
```
